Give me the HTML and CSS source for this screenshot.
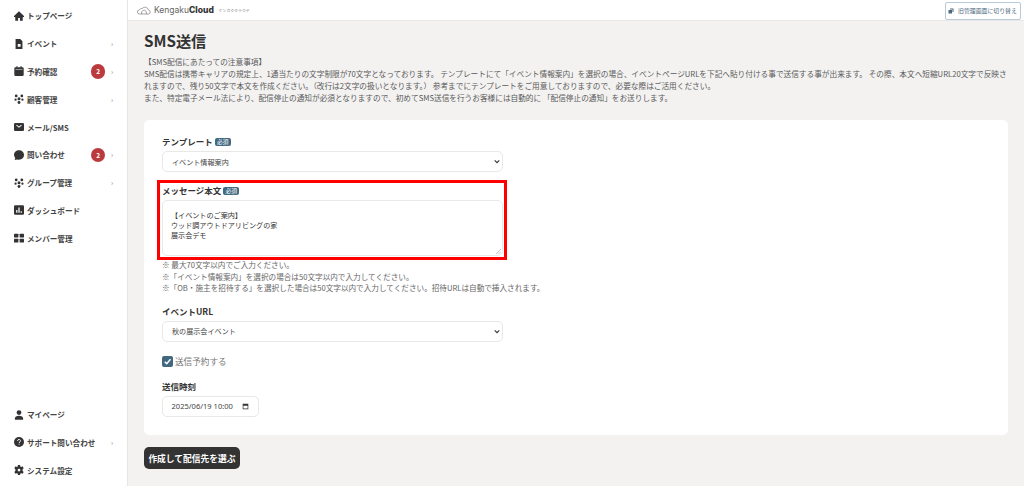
FILE: index.html
```html
<!DOCTYPE html>
<html lang="ja">
<head>
<meta charset="utf-8">
<title>SMS送信</title>
<link rel="stylesheet" href="styles.css">
</head>
<body>
<div class="app">
  <aside class="sidebar">
    <nav class="nav">
      <a class="item"><svg class="ic" viewBox="0 0 16 16"><path d="M8 .5 0 8v1.500h2V15.500h4.500V11h3v4.500H14V9.500h2V8z"/></svg><span class="lbl">トップページ</span></a>
      <a class="item"><svg class="ic" viewBox="0 0 16 16"><path fill-rule="evenodd" d="M2.500 0H10l3.500 3.500V16h-11zM6 8v4.500h4.500V8z"/></svg><span class="lbl">イベント</span><span class="chev">›</span></a>
      <a class="item"><svg class="ic" viewBox="0 0 16 16"><path fill-rule="evenodd" d="M4 0h1.500v2h5V0H12v2h1.500A2 2 0 0 1 15.500 4v10a2 2 0 0 1-2 2h-11a2 2 0 0 1-2-2V4a2 2 0 0 1 2-2H4zM2.500 5.500V6.500h11V5.500z"/></svg><span class="lbl">予約確認</span><span class="badge">2</span><span class="chev">›</span></a>
      <a class="item"><svg class="ic" viewBox="0 0 16 16"><circle cx="3.500" cy="3" r="2.200"/><circle cx="12.500" cy="3" r="2.200"/><circle cx="8" cy="7.500" r="2.400"/><circle cx="2.500" cy="9" r="1.800"/><circle cx="13.500" cy="9" r="1.800"/><circle cx="8" cy="13.500" r="2.300"/></svg><span class="lbl">顧客管理</span><span class="chev">›</span></a>
      <a class="item"><svg class="ic" viewBox="0 0 16 16"><path fill-rule="evenodd" d="M2 1.500h12A2 2 0 0 1 16 3.500v9a2 2 0 0 1-2 2H2a2 2 0 0 1-2-2v-9a2 2 0 0 1 2-2zM3.500 5.500 8 9l4.500-3.500-.8-1L8 7.300 4.300 4.500z"/></svg><span class="lbl">メール/SMS</span></a>
      <a class="item"><svg class="ic" viewBox="0 0 16 16"><path d="M8 .5c4.400 0 8 3.300 8 7.500s-3.600 7.500-8 7.500c-1.100 0-2.100-.2-3-.5L1 16l1-3.300A7.200 7.200 0 0 1 0 8C0 3.800 3.600.5 8 .5z"/></svg><span class="lbl">問い合わせ</span><span class="badge">2</span><span class="chev">›</span></a>
      <a class="item"><svg class="ic" viewBox="0 0 16 16"><circle cx="3.500" cy="3" r="2.200"/><circle cx="12.500" cy="3" r="2.200"/><circle cx="8" cy="7.500" r="2.400"/><circle cx="2.500" cy="9" r="1.800"/><circle cx="13.500" cy="9" r="1.800"/><circle cx="8" cy="13.500" r="2.300"/></svg><span class="lbl">グループ管理</span><span class="chev">›</span></a>
      <a class="item"><svg class="ic" viewBox="0 0 16 16"><path fill-rule="evenodd" d="M2 .5h12A2 2 0 0 1 16 2.500v11a2 2 0 0 1-2 2H2a2 2 0 0 1-2-2v-11a2 2 0 0 1 2-2zM3.500 8v4.500h2V8zm3.500-4v8.500h2V4zm3.500 6v2.500h2V10z"/></svg><span class="lbl">ダッシュボード</span></a>
      <a class="item"><svg class="ic" viewBox="0 0 16 16"><rect x="0" y="1" width="7" height="6.300" rx="1"/><rect x="9" y="1" width="7" height="6.300" rx="1"/><rect x="0" y="9" width="7" height="6.300" rx="1"/><rect x="9" y="9" width="7" height="6.300" rx="1"/></svg><span class="lbl">メンバー管理</span></a>
    </nav>
    <nav class="nav">
      <a class="item"><svg class="ic" viewBox="0 0 16 16"><circle cx="8" cy="4" r="3.800"/><path d="M1.500 15.500V13c0-2 2.500-4 6.500-4s6.500 2 6.500 4v2.500z"/></svg><span class="lbl">マイページ</span></a>
      <a class="item"><svg class="ic" viewBox="0 0 16 16"><circle cx="8" cy="8" r="8"/><path d="M5.600 6.200C5.700 4.700 6.700 3.900 8 3.900c1.400 0 2.400.9 2.400 2.100 0 1.900-2.200 1.800-2.200 3.500M8.200 10.800v1.500" fill="none" stroke="#fff" stroke-width="1.500"/></svg><span class="lbl">サポート問い合わせ</span><span class="chev">›</span></a>
      <a class="item"><svg class="ic" viewBox="0 0 16 16"><path fill-rule="evenodd" d="M6.300 0h3.400l.4 2.300 1.500.7 2-1.100L15.500 5l-1.700 1.600v2.800l1.700 1.600-1.900 3.100-2-1.100-1.500.7-.4 2.300H6.300l-.4-2.300-1.500-.7-2 1.100L.5 11l1.700-1.600V6.600L.5 5l1.900-3.100 2 1.100 1.500-.7zM8 5.800a2.200 2.200 0 1 0 0 4.400 2.200 2.200 0 0 0 0-4.400z"/></svg><span class="lbl">システム設定</span></a>
    </nav>
  </aside>
  <div class="main">
    <header class="topbar">
      <div class="logo">
        <svg class="cloud" viewBox="0 0 24 14"><path d="M6 13H4.500a3.500 3.500 0 0 1-.5-7A5 5 0 0 1 9 3.500 6 6 0 0 1 19.500 6 3.600 3.600 0 0 1 20 13H6z" fill="none" stroke="#666" stroke-width="1"/><path d="M8 13V9l4-3 4 3v4" fill="none" stroke="#666" stroke-width="1"/></svg>
        <span class="brand">Kengaku<b>Cloud</b></span>
        <span class="kana">ケンガククラウド</span>
      </div>
      <a class="switch"><svg class="sw-ic" viewBox="0 0 12 12"><path d="M1 4h7v7H1z"/><path d="M4 1h7v7H9V3H4z"/></svg>旧管理画面に切り替え</a>
    </header>
    <main class="content">
      <h1 class="title">SMS送信</h1>
      <div class="notice">
        <p>【SMS配信にあたっての注意事項】</p>
        <p>SMS配信は携帯キャリアの規定上、1通当たりの文字制限が70文字となっております。 テンプレートにて「イベント情報案内」を選択の場合、イベントページURLを下記へ貼り付ける事で送信する事が出来ます。 その際、本文へ短縮URL20文字で反映されますので、残り50文字で本文を作成ください。（改行は2文字の扱いとなります。） 参考までにテンプレートをご用意しておりますので、必要な際はご活用ください。</p>
        <p>また、特定電子メール法により、配信停止の通知が必須となりますので、初めてSMS送信を行うお客様には自動的に 「配信停止の通知」をお送りします。</p>
      </div>
      <form class="card">
        <div class="field first">
          <div class="label">テンプレート<span class="req">必須</span></div>
          <select class="control pick"><option>イベント情報案内</option></select>
        </div>
        <div class="field marked">
          <div class="label">メッセージ本文<span class="req">必須</span></div>
          <textarea class="control area" rows="4">【イベントのご案内】
ウッド調アウトドアリビングの家
展示会デモ</textarea>
        </div>
        <ul class="hints">
          <li>※ 最大70文字以内でご入力ください。</li>
          <li>※「イベント情報案内」を選択の場合は50文字以内で入力してください。</li>
          <li>※「OB・施主を招待する」を選択した場合は50文字以内で入力してください。招待URLは自動で挿入されます。</li>
        </ul>
        <div class="field url">
          <div class="label">イベントURL</div>
          <select class="control pick"><option>秋の展示会イベント</option></select>
        </div>
        <label class="check"><span class="box"><svg viewBox="0 0 10 10"><path d="M2.500 5.200 4.300 7l3.400-4" fill="none" stroke="#fff" stroke-width="1.400"/></svg></span>送信予約する</label>
        <div class="field time">
          <div class="label">送信時刻</div>
          <div class="control date"><span>2025/06/19 10:00</span><svg class="cal" viewBox="0 0 10 10"><path fill-rule="evenodd" d="M1 1h8v8H1zm1 3v4h6V4z"/></svg></div>
        </div>
      </form>
      <button class="submit" type="button">作成して配信先を選ぶ</button>
    </main>
  </div>
</div>
</body>
</html>
```

FILE: styles.css
```css
* { box-sizing: border-box; }
html, body { margin: 0; height: 100%; }
body {
  font-family: "Noto Sans CJK JP", "Noto Sans", sans-serif;
  color: #333;
  background: #f3f2f1;
  overflow: hidden;
}
.app { display: flex; height: 486px; }
.sidebar {
  width: 128px;
  flex: none;
  background: #fff;
  border-right: 1px solid #e6e6e6;
  display: flex;
  flex-direction: column;
  justify-content: space-between;
  padding: 2px 0 2px;
}
.nav { display: flex; flex-direction: column; }
.item {
  display: flex;
  align-items: center;
  height: 27.8px;
  padding: 0 14px 0 13.500px;
  font-size: 7.600px;
  font-weight: 700;
  color: #444;
}
.ic { width: 10px; height: 10px; fill: #333; flex: none; margin-right: 3.500px; }
.lbl { flex: 1; white-space: nowrap; }
.chev { color: #888; font-size: 7px; font-weight: 400; width: 6px; text-align: right; line-height: 1; }
.badge {
  width: 14.500px;
  height: 14.500px;
  border-radius: 50%;
  background: #bb3a3d;
  color: #fff;
  font-size: 6.500px;
  text-align: center;
  line-height: 14.500px;
  margin-right: 1.700px;
}
.main { flex: 1; min-width: 0; display: flex; flex-direction: column; }
.topbar {
  height: 21px;
  background: #fff;
  border-bottom: 1px solid #e8e8e8;
  display: flex;
  align-items: center;
  justify-content: space-between;
  padding: 0 0 0 9px;
}
.logo { display: flex; align-items: center; color: #555; }
.cloud { width: 14px; height: 9px; margin-right: 3px; }
.brand { font-family: "Inter", "Noto Sans", sans-serif; font-size: 8.500px; color: #666; }
.brand b { color: #333; font-weight: 800; }
.kana { font-size: 3.900px; margin-left: 5px; color: #777; }
.switch {
  display: flex;
  align-items: center;
  height: 18px;
  width: 76px;
  margin-right: 3px;
  margin-top: 1px;
  border: 1px solid #b9cbd6;
  border-radius: 2px;
  padding-left: 2px;
  font-size: 5.900px;
  color: #4b6a7d;
  white-space: nowrap;
  background: #fff;
}
.sw-ic { width: 6px; height: 6px; fill: #4b6a7d; margin-right: 4px; flex: none; }
.content { padding: 0 16px; }
.title { margin: 7px 0 0; font-size: 15.200px; font-weight: 700; line-height: 24px; color: #333; }
.notice { margin-top: 4px; font-size: 7.670px; line-height: 12px; color: #5a5a5a; }
.notice p { margin: 0; }
.card {
  margin-top: 16px;
  height: 315px;
  background: #fff;
  border-radius: 5px;
  padding: 15px 18px;
  width: 864px;
}
.field { width: 341px; }
.label {
  font-size: 8.500px;
  font-weight: 700;
  line-height: 13px;
  height: 13px;
  color: #333;
  margin-bottom: 3px;
  display: flex;
  align-items: center;
}
.req {
  margin-left: 2px;
  background: #40687f;
  color: #fff;
  font-size: 5.800px;
  font-weight: 400;
  line-height: 8px;
  height: 8px;
  padding: 0 2.200px;
  border-radius: 2px;
}
.control {
  display: block;
  width: 100%;
  height: 21px;
  border: 1px solid #eae8e4;
  border-radius: 5px;
  background: #fff;
  font-family: inherit;
  font-size: 7.100px;
  color: #444;
  padding: 0 8px;
}
.pick {
  appearance: none;
  padding: 0 0 0 9px;
  background: #fff url("data:image/svg+xml,%3Csvg xmlns='http://www.w3.org/2000/svg' viewBox='0 0 8 6'%3E%3Cpath d='M1 1.500 4 4.500 7 1.500' fill='none' stroke='%23333' stroke-width='1.500'/%3E%3C/svg%3E") no-repeat right 2px center / 6px 5px;
}
.marked { position: relative; margin-top: 12px; }
.marked::after {
  content: "";
  position: absolute;
  inset: -4px -4px -4px -5px;
  border: 3px solid #f00;
  pointer-events: none;
}
.area {
  height: 56px;
  line-height: 10px;
  padding: 9px 8px 0;
  resize: none;
  color: #333;
  background: #fff url("data:image/svg+xml,%3Csvg xmlns='http://www.w3.org/2000/svg' viewBox='0 0 5 5'%3E%3Cpath d='M0 5 5 0M2.500 5 5 2.500' stroke='%23999' stroke-width='.6'/%3E%3C/svg%3E") no-repeat right 1px bottom 1px / 5px 5px;
}
.hints { list-style: none; margin: 3px 0 0; padding: 0; font-size: 7.620px; line-height: 11.500px; color: #666; white-space: nowrap; }
.url { margin-top: 11px; }
.check { display: flex; align-items: center; margin-top: 14px; font-size: 8.600px; color: #777; line-height: 11px; }
.box { width: 11px; height: 11px; background: #40687f; border-radius: 2px; margin-right: 2px; display: flex; }
.box svg { width: 100%; height: 100%; }
.time { margin-top: 13px; }
.date {
  width: 97px;
  display: flex;
  align-items: center;
  justify-content: space-between;
  padding: 0 9px 0 8.500px;
  font-family: "Noto Sans", sans-serif;
  font-size: 7.550px;
}
.cal { width: 7px; height: 7px; fill: #333; }
.submit {
  display: block;
  margin-top: 12px;
  width: 96px;
  height: 22px;
  padding: 0;
  border: 0;
  border-radius: 5px;
  background: #333;
  color: #fff;
  font-family: inherit;
  font-size: 8.750px;
  font-weight: 700;
}
```
